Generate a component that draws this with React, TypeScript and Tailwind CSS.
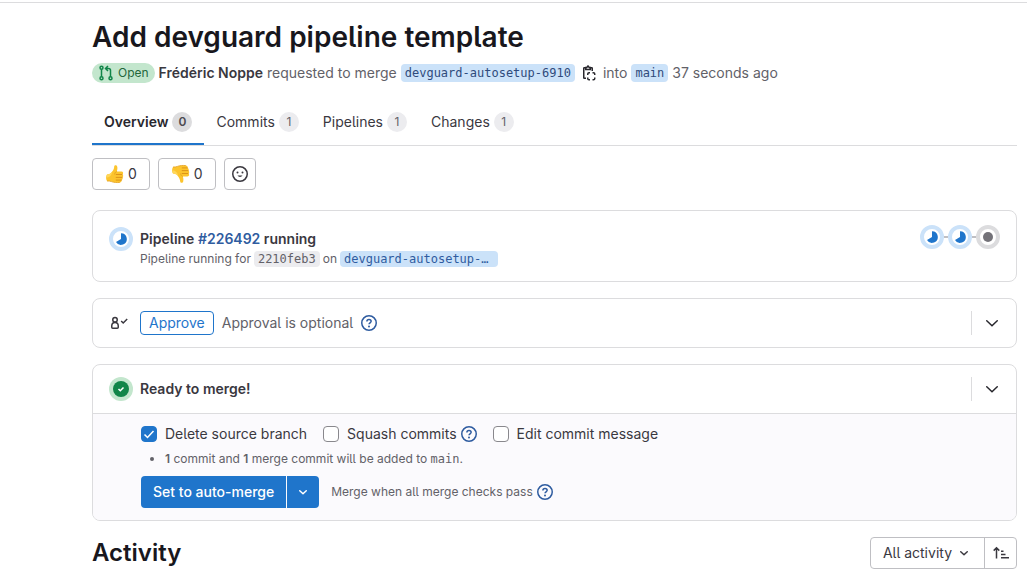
import { ReactNode, useState } from "react";

function MergeRequestIcon() {
  return (
    <svg viewBox="0 0 16 16" className="size-4 shrink-0 text-[#108548]" fill="none" stroke="currentColor" strokeWidth="1.5" aria-hidden="true">
      <circle cx="3.5" cy="2.75" r="1.5" />
      <circle cx="3.5" cy="13.25" r="1.5" />
      <circle cx="12.5" cy="13.25" r="1.5" />
      <path d="M3.5 4.25v7.5M12.5 11.75V5.5a2 2 0 0 0-2-2H8M10 1 7.5 3.5 10 6" />
    </svg>
  );
}

function CopyIcon() {
  return (
    <svg viewBox="0 0 16 16" className="size-4" fill="none" stroke="currentColor" strokeWidth="1.5" aria-hidden="true">
      <path d="M4.5 2.75H3.25a.5.5 0 0 0-.5.5v9.500a.5.5 0 0 0 .5.5H5M9.500 2.750h1.250a.5.5 0 0 1 .5.5V6" />
      <path d="M4.750 4.500V2.500h1L7 1l1.250 1.500h1v2z" />
      <path d="M6.750 10V9a1.250 1.250 0 0 1 1.250-1.250h1M11.500 7.750h1A1.250 1.250 0 0 1 13.750 9v1M13.750 12.500v1a1.250 1.250 0 0 1-1.250 1.250h-1M9 14.750H8a1.250 1.250 0 0 1-1.250-1.250v-1" />
    </svg>
  );
}

function ThumbShape() {
  return (
    <>
      <path d="M2 10.5C4.2 10.5 6 9.6 7.2 7.6 8.4 5.8 9.1 4.4 9.2 2.4 9.3.9 11.7.6 12.2 2.6c.5 1.8.1 3.3-.4 4.9h4.7c1.8 0 2.2 2.2.9 2.9 1.2.6 1.1 2.4-.1 2.9.8.8.5 2.3-.7 2.7.4 1.2-.4 2.3-1.8 2.4-3 .3-6 .2-8.3-.8-1.4-.6-2.9-.6-4.5-.6C.8 15.600.8 12 2 10.500z" fill="#fcc42d" />
      <path d="M2 10.500c2.200 0 4-.9 5.200-2.900-.2 2.300-1.300 4.500-3.200 5.400-1 .5-2 .4-2.700.3.1-1.200.3-2.200.7-2.800z" fill="#ffd75a" />
      <path d="M11.200 10.500h5.800M11.200 13.400h6M11.200 16.100h5.200" stroke="#d98e16" strokeWidth=".9" strokeLinecap="round" />
      <path d="M11.800 7.500c-1.500.6-2.200 1.700-2.100 3.100M2 17c1.600 0 3.100 0 4.500.6 2.300 1 5.300 1.100 8.300.8" stroke="#e59f1d" strokeWidth=".8" fill="none" />
    </>
  );
}

function Thumb({ down = false }: { down?: boolean }) {
  return (
    <svg viewBox="0 0 20 20" className="size-5" aria-hidden="true">
      {down ? (
        <g transform="matrix(1 0 0 -1 0 20)"><ThumbShape /></g>
      ) : (
        <ThumbShape />
      )}
    </svg>
  );
}

function SmileIcon() {
  return (
    <svg viewBox="0 0 16 16" className="size-4" fill="none" stroke="currentColor" strokeWidth="1.5" aria-hidden="true">
      <circle cx="8" cy="8" r="7.250" />
      <path d="M5.500 9.600c1 1.900 4 1.900 5 0z" fill="currentColor" stroke="none" />
      <circle cx="5.500" cy="6.500" r="1" fill="currentColor" stroke="none" />
      <circle cx="10.500" cy="6.500" r="1" fill="currentColor" stroke="none" />
    </svg>
  );
}

function RunningIcon() {
  return (
    <svg viewBox="0 0 24 24" className="size-6 shrink-0" role="img" aria-label="Running">
      <circle cx="12" cy="12" r="10" fill="#fff" stroke="#cbe2f9" strokeWidth="4" />
      <path d="M12 6.200a5.800 5.800 0 1 1-5 8.700L12 12z" fill="#1f75cb" />
    </svg>
  );
}

function CreatedIcon() {
  return (
    <svg viewBox="0 0 24 24" className="size-6 shrink-0" role="img" aria-label="Created">
      <circle cx="12" cy="12" r="10" fill="#fff" stroke="#dcdcde" strokeWidth="4" />
      <circle cx="12" cy="12" r="5" fill="#737278" />
    </svg>
  );
}

function SuccessIcon() {
  return (
    <svg viewBox="0 0 24 24" className="size-6 shrink-0" aria-hidden="true">
      <circle cx="12" cy="12" r="12" fill="#c3e6cd" />
      <circle cx="12" cy="12" r="8" fill="#108548" />
      <path d="m9.500 12 1.800 1.800 3.200-3.300" fill="none" stroke="#fff" strokeWidth="1.500" />
    </svg>
  );
}

function ApprovalIcon() {
  return (
    <svg viewBox="0 0 18 16" className="h-4 w-[18px]" fill="none" stroke="currentColor" strokeWidth="1.500" aria-hidden="true">
      <circle cx="5" cy="4.800" r="2.250" />
      <path d="M5 7.500c-2 0-3.250 1.500-3.250 3.500v1.250a1 1 0 0 0 1 1h4.500a1 1 0 0 0 1-1V11c0-2-1.250-3.500-3.250-3.500zM11.200 6l2 2 4-4" />
    </svg>
  );
}

function Chevron() {
  return (
    <svg viewBox="0 0 16 16" className="size-4" fill="none" stroke="currentColor" strokeWidth="1.500" strokeLinecap="round" aria-hidden="true">
      <path d="m2.750 5.750 5.250 5 5.250-5" />
    </svg>
  );
}

function SmallChevron() {
  return (
    <svg viewBox="0 0 16 16" className="size-4" fill="none" stroke="currentColor" strokeWidth="1.500" strokeLinecap="round" strokeLinejoin="round" aria-hidden="true">
      <path d="M4.750 6.750 8 9.750l3.250-3" />
    </svg>
  );
}

function SortIcon() {
  return (
    <svg viewBox="0 0 16 16" className="size-4" fill="none" stroke="currentColor" strokeWidth="1.500" aria-hidden="true">
      <path d="M3.500 13.500V3M.7 5.600l2.800-2.800 2.800 2.800M8 6.250h2.500M8 9.500h4.500M8 12.750h8" />
    </svg>
  );
}

function Help({ label }: { label: string }) {
  return (
    <button type="button" aria-label={label} className="flex text-[#2f5ca0]">
      <svg viewBox="0 0 16 16" className="size-4" fill="none" stroke="currentColor" strokeWidth="1.500" aria-hidden="true">
        <circle cx="8" cy="8" r="7.250" />
        <path d="M5.900 6.500C5.900 5.200 6.800 4.400 8 4.400s2.150.8 2.150 1.900c0 1.500-2.100 1.600-2.100 3" />
        <circle cx="8" cy="11.500" r="1" fill="currentColor" stroke="none" />
      </svg>
    </button>
  );
}

function Tab({ label, count, active = false }: { label: string; count: number; active?: boolean }) {
  return (
    <a
      href="#"
      aria-current={active ? "page" : undefined}
      className={
        active
          ? "flex h-12 items-center gap-1 border-b-2 border-[#1f75cb] px-3 pt-1 font-semibold text-[#28272d]"
          : "flex h-12 items-center gap-1 border-b-2 border-transparent px-3 pt-1"
      }
    >
      {label}
      <span
        className={
          active
            ? "flex size-5 items-center justify-center rounded-full bg-[#dcdcde] text-xs text-[#4c4b51]"
            : "flex size-5 items-center justify-center rounded-full bg-[#ececef] text-xs text-[#626168]"
        }
      >
        {count}
      </span>
    </a>
  );
}

function Check({ id, label, initial = false }: { id: string; label: string; initial?: boolean }) {
  const [on, setOn] = useState(initial);
  return (
    <div className="flex items-center gap-2">
      <span className="grid place-items-center">
        <input
          id={id}
          type="checkbox"
          checked={on}
          onChange={(e) => setOn(e.target.checked)}
          className="col-start-1 row-start-1 size-4 appearance-none rounded border border-[#89888d] bg-white checked:border-[#1f75cb] checked:bg-[#1f75cb]"
        />
        {on && (
          <svg viewBox="0 0 16 16" className="pointer-events-none col-start-1 row-start-1 size-4" fill="none" stroke="#fff" strokeWidth="1.500" aria-hidden="true">
            <path d="m3.500 8.500 3 3 6-6.500" />
          </svg>
        )}
      </span>
      <label htmlFor={id}>{label}</label>
    </div>
  );
}

function Card({ children }: { children: ReactNode }) {
  return <section className="overflow-hidden rounded-lg border border-[#dcdcde]">{children}</section>;
}

function Expand({ label }: { label: string }) {
  return (
    <div className="ml-auto flex h-6 items-center border-l border-[#dcdcde] pl-3">
      <button type="button" aria-label={label} className="flex text-[#28272d]">
        <Chevron />
      </button>
    </div>
  );
}

const mono = "font-['DejaVu_Sans_Mono',monospace]";

export default function App() {
  return (
    <div className="pt-[2px] font-['Inter',sans-serif] text-sm leading-5 text-[#3a383f] [font-feature-settings:'cv05']">
      <main className="border-t border-[#dcdcde] pt-4 pr-[10px] pl-[92px]">
        <h1 className="text-[28px] leading-9 font-semibold text-[#18171d]">Add devguard pipeline template</h1>
        <div className="mt-1.5 flex h-6 items-center gap-1 whitespace-nowrap text-[#626168]">
          <span className="flex h-5 items-center gap-1 rounded-full bg-[#c3e6cd] px-1.5 text-xs text-[#24663b]">
            <MergeRequestIcon />
            Open
          </span>
          <a href="#" className="font-semibold text-[#3a383f]">Frédéric Noppe</a>
          requested to merge
          <a href="#" className={`${mono} rounded bg-[#cbe2f9] px-1 text-xs leading-[18px] text-[#2f4b7c]`}>devguard-autosetup-6910</a>
          <button type="button" aria-label="Copy branch name" className="mx-0.5 flex text-[#28272d]">
            <CopyIcon />
          </button>
          into
          <a href="#" className={`${mono} rounded bg-[#cbe2f9] px-1 text-xs leading-[18px] text-[#2f4b7c]`}>main</a>
          37 seconds ago
        </div>

        <nav className="mt-3 flex border-b border-[#dcdcde]" aria-label="Merge request">
          <Tab label="Overview" count={0} active />
          <Tab label="Commits" count={1} />
          <Tab label="Pipelines" count={1} />
          <Tab label="Changes" count={1} />
        </nav>

        <div className="mt-3 flex gap-2">
          <button type="button" aria-label="Thumbs up" className="flex h-8 items-center gap-[3px] rounded border border-[#bfbfc3] px-3">
            <Thumb />0
          </button>
          <button type="button" aria-label="Thumbs down" className="flex h-8 items-center gap-[3px] rounded border border-[#bfbfc3] px-3">
            <Thumb down />0
          </button>
          <button type="button" aria-label="Add reaction" className="flex size-8 items-center justify-center rounded border border-[#bfbfc3]">
            <SmileIcon />
          </button>
        </div>

        <div className="mt-5 flex flex-col gap-4">
          <Card>
            <div className="flex items-start px-4 pt-[14px] pb-3">
              <div className="mt-0.5 flex">
                <RunningIcon />
              </div>
              <div className="ml-[7px] pt-1">
                <p className="font-semibold">
                  Pipeline <a href="#" className="text-[#2f5ca0]">#226492</a> running
                </p>
                <p className="flex items-center gap-[3px] text-xs leading-5 text-[#626168]">
                  Pipeline running for
                  <a href="#" className={`${mono} rounded bg-[#ececef] px-1 leading-4`}>2210feb3</a>
                  on
                  <a href="#" className={`${mono} w-[158px] rounded bg-[#cbe2f9] px-1 leading-4 text-[#2f5ca0]`}>devguard-autosetup-…</a>
                </p>
              </div>
              <div className="ml-auto flex items-center">
                <RunningIcon />
                <span className="h-0.5 w-1 bg-[#bfbfc3]" />
                <RunningIcon />
                <span className="h-0.5 w-1 bg-[#bfbfc3]" />
                <CreatedIcon />
              </div>
            </div>
          </Card>

          <Card>
            <div className="flex h-12 items-center px-4">
              <div className="flex w-[31px] pl-px">
                <ApprovalIcon />
              </div>
              <button type="button" className="h-6 rounded border border-[#1f75cb] px-2 leading-[22px] text-[#1f75cb]">Approve</button>
              <span className="mx-2 text-[#626168]">Approval is optional</span>
              <Help label="About approvals" />
              <Expand label="Expand approvals" />
            </div>
          </Card>

          <Card>
            <div className="flex h-12 items-center px-4">
              <SuccessIcon />
              <h2 className="ml-[7px] font-semibold">Ready to merge!</h2>
              <Expand label="Expand merge details" />
            </div>
            <div className="border-t border-[#dcdcde] bg-[#fbfafd] pt-[10px] pr-4 pb-3 pl-12">
              <div className="flex items-center">
                <Check id="delete-branch" label="Delete source branch" initial />
                <div className="ml-4 flex items-center gap-1">
                  <Check id="squash" label="Squash commits" />
                  <Help label="About squashing" />
                </div>
                <div className="ml-4">
                  <Check id="edit-message" label="Edit commit message" />
                </div>
              </div>
              <ul className="mt-[5px] list-disc pl-6 text-xs leading-5 text-[#626168]">
                <li>
                  <b className="font-semibold">1</b> commit and <b className="font-semibold">1</b> merge commit will be added to{" "}
                  <span className={mono}>main</span>.
                </li>
              </ul>
              <div className="mt-[7px] flex items-center">
                <div className="flex gap-px text-white">
                  <button type="button" className="h-8 rounded-l bg-[#1f75cb] px-3 font-medium">Set to auto-merge</button>
                  <button type="button" aria-label="Merge options" className="flex size-8 items-center justify-center rounded-r bg-[#1f75cb]">
                    <SmallChevron />
                  </button>
                </div>
                <span className="mr-1 ml-3 text-xs text-[#626168]">Merge when all merge checks pass</span>
                <Help label="About merge checks" />
              </div>
            </div>
          </Card>
        </div>

        <div className="mt-4 flex items-center justify-between">
          <h2 className="text-2xl font-semibold text-[#18171d]">Activity</h2>
          <div className="flex h-8 rounded border border-[#bfbfc3]">
            <button type="button" className="flex items-center gap-1 px-3">
              All activity
              <SmallChevron />
            </button>
            <button type="button" aria-label="Sort direction" className="flex w-8 items-center justify-center border-l border-[#bfbfc3]">
              <SortIcon />
            </button>
          </div>
        </div>
      </main>
    </div>
  );
}
